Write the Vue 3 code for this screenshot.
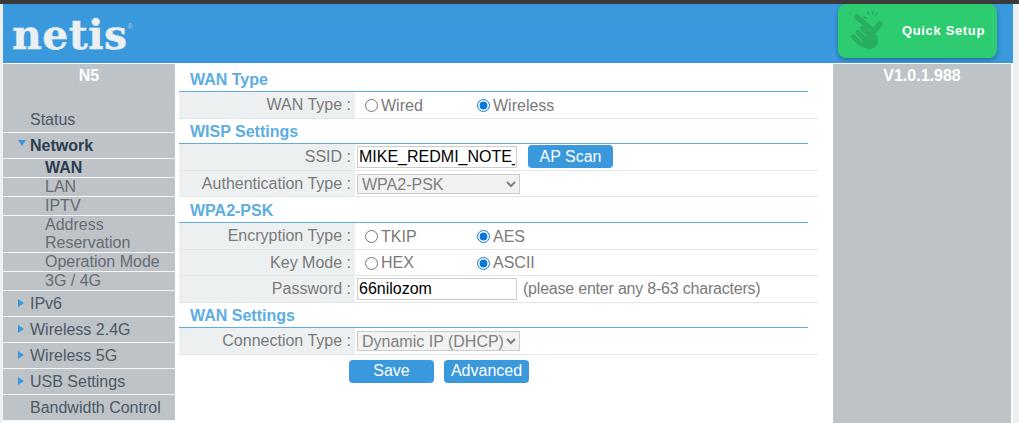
<script setup>
const menu = [
  { name: "Status", first: true },
  {
    name: "Network",
    open: true,
    subs: [
      { name: "WAN", active: true },
      { name: "LAN" },
      { name: "IPTV" },
      { name: "Address Reservation" },
      { name: "Operation Mode" },
      { name: "3G / 4G" },
    ],
  },
  { name: "IPv6", arrow: true },
  { name: "Wireless 2.4G", arrow: true },
  { name: "Wireless 5G", arrow: true },
  { name: "USB Settings", arrow: true },
  { name: "Bandwidth Control" },
];
</script>

<template>
  <div class="topbar"></div>
  <div class="page">
    <header class="header">
      <div class="logo">netis<sup>®</sup></div>
      <a class="quick">
        <svg class="hand" width="60" height="54" viewBox="0 0 60 54">
          <g fill="none" stroke="#27ae60" stroke-linecap="round">
            <path d="M17 13 L31 25" stroke-width="5.5" />
            <path d="M40 20 L31 31" stroke-width="5.5" />
            <path d="M13.5 33 L20 39" stroke-width="5" />
            <path d="M18 28.5 L24.5 35" stroke-width="5" />
            <path d="M22.5 24.5 L29 31" stroke-width="5" />
            <path d="M28 8 L29 11 M32.5 7 L33 10.5 M37 9 L35.5 12 M24 13 L26.5 14" stroke-width="1.6" />
          </g>
          <path d="M22 38 L30 28 L37 31 L38 38 Q37 44 30 45 Q24 45 19 41 Z" fill="#27ae60" />
        </svg>
        <span>Quick Setup</span>
      </a>
    </header>
    <div class="body">
      <aside class="side">
        <div class="model">N5</div>
        <template v-for="item in menu" :key="item.name">
          <div class="menu-item" :class="{ first: item.first, open: item.open }">
            <i v-if="item.arrow" class="arrow"></i>
            <i v-if="item.open" class="arrow down"></i>
            {{ item.name }}
          </div>
          <div v-for="s in item.subs" :key="s.name" class="sub-item" :class="{ active: s.active }">
            {{ s.name }}
          </div>
        </template>
      </aside>
      <main class="main">
        <h3 class="title">WAN Type</h3>
        <div class="row">
          <label class="lab">WAN Type :</label>
          <div class="val">
            <label class="opt"><input type="radio" name="wan" />Wired</label>
            <label class="opt"><input type="radio" name="wan" checked />Wireless</label>
          </div>
        </div>
        <h3 class="title">WISP Settings</h3>
        <div class="row">
          <label class="lab">SSID :</label>
          <div class="val">
            <input class="txt" type="text" value="MIKE_REDMI_NOTE_8" />
            <button class="btn scan">AP Scan</button>
          </div>
        </div>
        <div class="row">
          <label class="lab">Authentication Type :</label>
          <div class="val">
            <select class="sel" disabled><option>WPA2-PSK</option></select>
          </div>
        </div>
        <h3 class="title">WPA2-PSK</h3>
        <div class="row">
          <label class="lab">Encryption Type :</label>
          <div class="val">
            <label class="opt"><input type="radio" name="enc" />TKIP</label>
            <label class="opt"><input type="radio" name="enc" checked />AES</label>
          </div>
        </div>
        <div class="row">
          <label class="lab">Key Mode :</label>
          <div class="val">
            <label class="opt"><input type="radio" name="key" />HEX</label>
            <label class="opt"><input type="radio" name="key" checked />ASCII</label>
          </div>
        </div>
        <div class="row">
          <label class="lab">Password :</label>
          <div class="val">
            <input class="txt" type="text" value="66nilozom" />
            <span class="hint">(please enter any 8-63 characters)</span>
          </div>
        </div>
        <h3 class="title">WAN Settings</h3>
        <div class="row">
          <label class="lab">Connection Type :</label>
          <div class="val">
            <select class="sel" disabled><option>Dynamic IP (DHCP)</option></select>
          </div>
        </div>
        <div class="actions">
          <button class="btn">Save</button>
          <button class="btn">Advanced</button>
        </div>
      </main>
      <aside class="right">V1.0.1.988</aside>
    </div>
  </div>
</template>

<style>
html,
body {
  margin: 0;
  background: #ecf0f1;
  overflow: hidden;
}
</style>

<style scoped>
.topbar {
  height: 4px;
  background: #3a3a3a;
}
.page {
  width: 1010px;
  height: 419px;
  margin-left: 3px;
  background: #fff;
  overflow: hidden;
  font-family: "Liberation Sans", Arial, sans-serif;
  font-size: 16px;
}
.header {
  height: 59px;
  background: #3a98dd;
  display: flex;
  justify-content: space-between;
  align-items: flex-start;
  padding-right: 16px;
}
.logo {
  margin: 6px 0 0 9px;
  font-family: "DejaVu Serif", serif;
  font-weight: bold;
  font-size: 41px;
  line-height: 50px;
  color: #ecf0f1;
  letter-spacing: 0.4px;
  -webkit-text-stroke: 0.4px #ecf0f1;
}
.logo sup {
  font-family: "Liberation Sans", sans-serif;
  font-size: 7px;
  font-weight: normal;
  vertical-align: 20px;
  line-height: 0;
  opacity: 0.6;
  -webkit-text-stroke: 0;
}
.quick {
  width: 159px;
  height: 54px;
  background: #2ecc71;
  border-radius: 8px;
  box-shadow: 0 2px 4px rgba(0, 0, 0, 0.3);
  display: flex;
  align-items: center;
  color: #fff;
  font-weight: bold;
  font-size: 13px;
  letter-spacing: 0.65px;
}
.quick span {
  margin-top: -2px;
}
.hand {
  margin-left: 2px;
  margin-right: 2px;
}
.body {
  display: flex;
  padding-top: 1px;
}
.side {
  width: 172px;
  flex: none;
  margin-right: 4px;
}
.model {
  height: 24px;
  background: #bdc3c7;
  color: #fff;
  font-weight: bold;
  text-align: center;
  line-height: 24px;
}
.menu-item {
  height: 25px;
  line-height: 25px;
  background: #bdc3c7;
  color: #4d5966;
  padding-left: 27px;
  border-bottom: 1px solid #f4f6f7;
  position: relative;
}
.menu-item.first {
  height: 44px;
  line-height: 64px;
}
.menu-item.open {
  font-weight: bold;
  color: #2c3e50;
}
.arrow {
  position: absolute;
  left: 15px;
  top: 8px;
  border-left: 6px solid #3a98dd;
  border-top: 4px solid transparent;
  border-bottom: 4px solid transparent;
}
.arrow.down {
  top: 7px;
  border-top: 6px solid #3a98dd;
  border-left: 4px solid transparent;
  border-right: 4px solid transparent;
  border-bottom: none;
}
.sub-item {
  background: #bdc3c7;
  color: #646c73;
  padding: 0 8px 0 42px;
  line-height: 18px;
  border-bottom: 1px solid #f4f6f7;
}
.sub-item.active {
  font-weight: bold;
  color: #2c3e50;
}
.main {
  width: 639px;
  flex: none;
  padding-top: 2.4px;
}
.title {
  margin: 0;
  width: 629px;
  height: 25.6px;
  box-sizing: border-box;
  padding: 4.7px 0 0 11px;
  font-size: 16px;
  line-height: 18px;
  font-weight: bold;
  color: #5dade2;
  border-bottom: 1px solid #5dade2;
}
.row {
  display: flex;
  height: 26.6px;
  box-sizing: border-box;
  border-bottom: 1px solid #e3e6e7;
}
.lab {
  width: 172px;
  padding-right: 4px;
  flex: none;
  background: #ecf0f1;
  color: #7a7a7a;
  text-align: right;
  line-height: 26.8px;
}
.val {
  display: flex;
  align-items: center;
  padding-left: 2px;
  color: #7a7a7a;
}
.opt {
  width: 112px;
  display: flex;
  align-items: center;
  padding: 1.6px 0 0 8px;
  box-sizing: border-box;
}
.opt input {
  margin: 0 3px 0 0;
  width: 13px;
  height: 13px;
  accent-color: #0a78d7;
}
.txt {
  width: 160px;
  height: 22px;
  box-sizing: border-box;
  padding: 0 1px;
  border: 1px solid #ccc;
  font-family: inherit;
  font-size: 16px;
  color: #000;
  outline: none;
}
.sel {
  width: 163px;
  height: 20px;
  border: 1px solid #ccc;
  background: #f2f2f2;
  font-family: inherit;
  font-size: 16px;
  color: #808080;
  opacity: 1;
}
.btn {
  width: 85px;
  height: 23px;
  padding: 0;
  border: none;
  border-radius: 4px;
  background: #3a98dd;
  color: #fff;
  font-family: inherit;
  font-size: 16px;
}
.scan {
  margin-left: 11px;
}
.hint {
  margin-left: 6px;
  padding-top: 1px;
  letter-spacing: -0.21px;
}
.actions {
  display: flex;
  gap: 10px;
  padding: 5px 0 0 170px;
}
.right {
  width: 178px;
  height: 400px;
  margin-left: 15px;
  background: #bdc3c7;
  color: #fff;
  font-weight: bold;
  text-align: center;
  line-height: 24px;
}
</style>
